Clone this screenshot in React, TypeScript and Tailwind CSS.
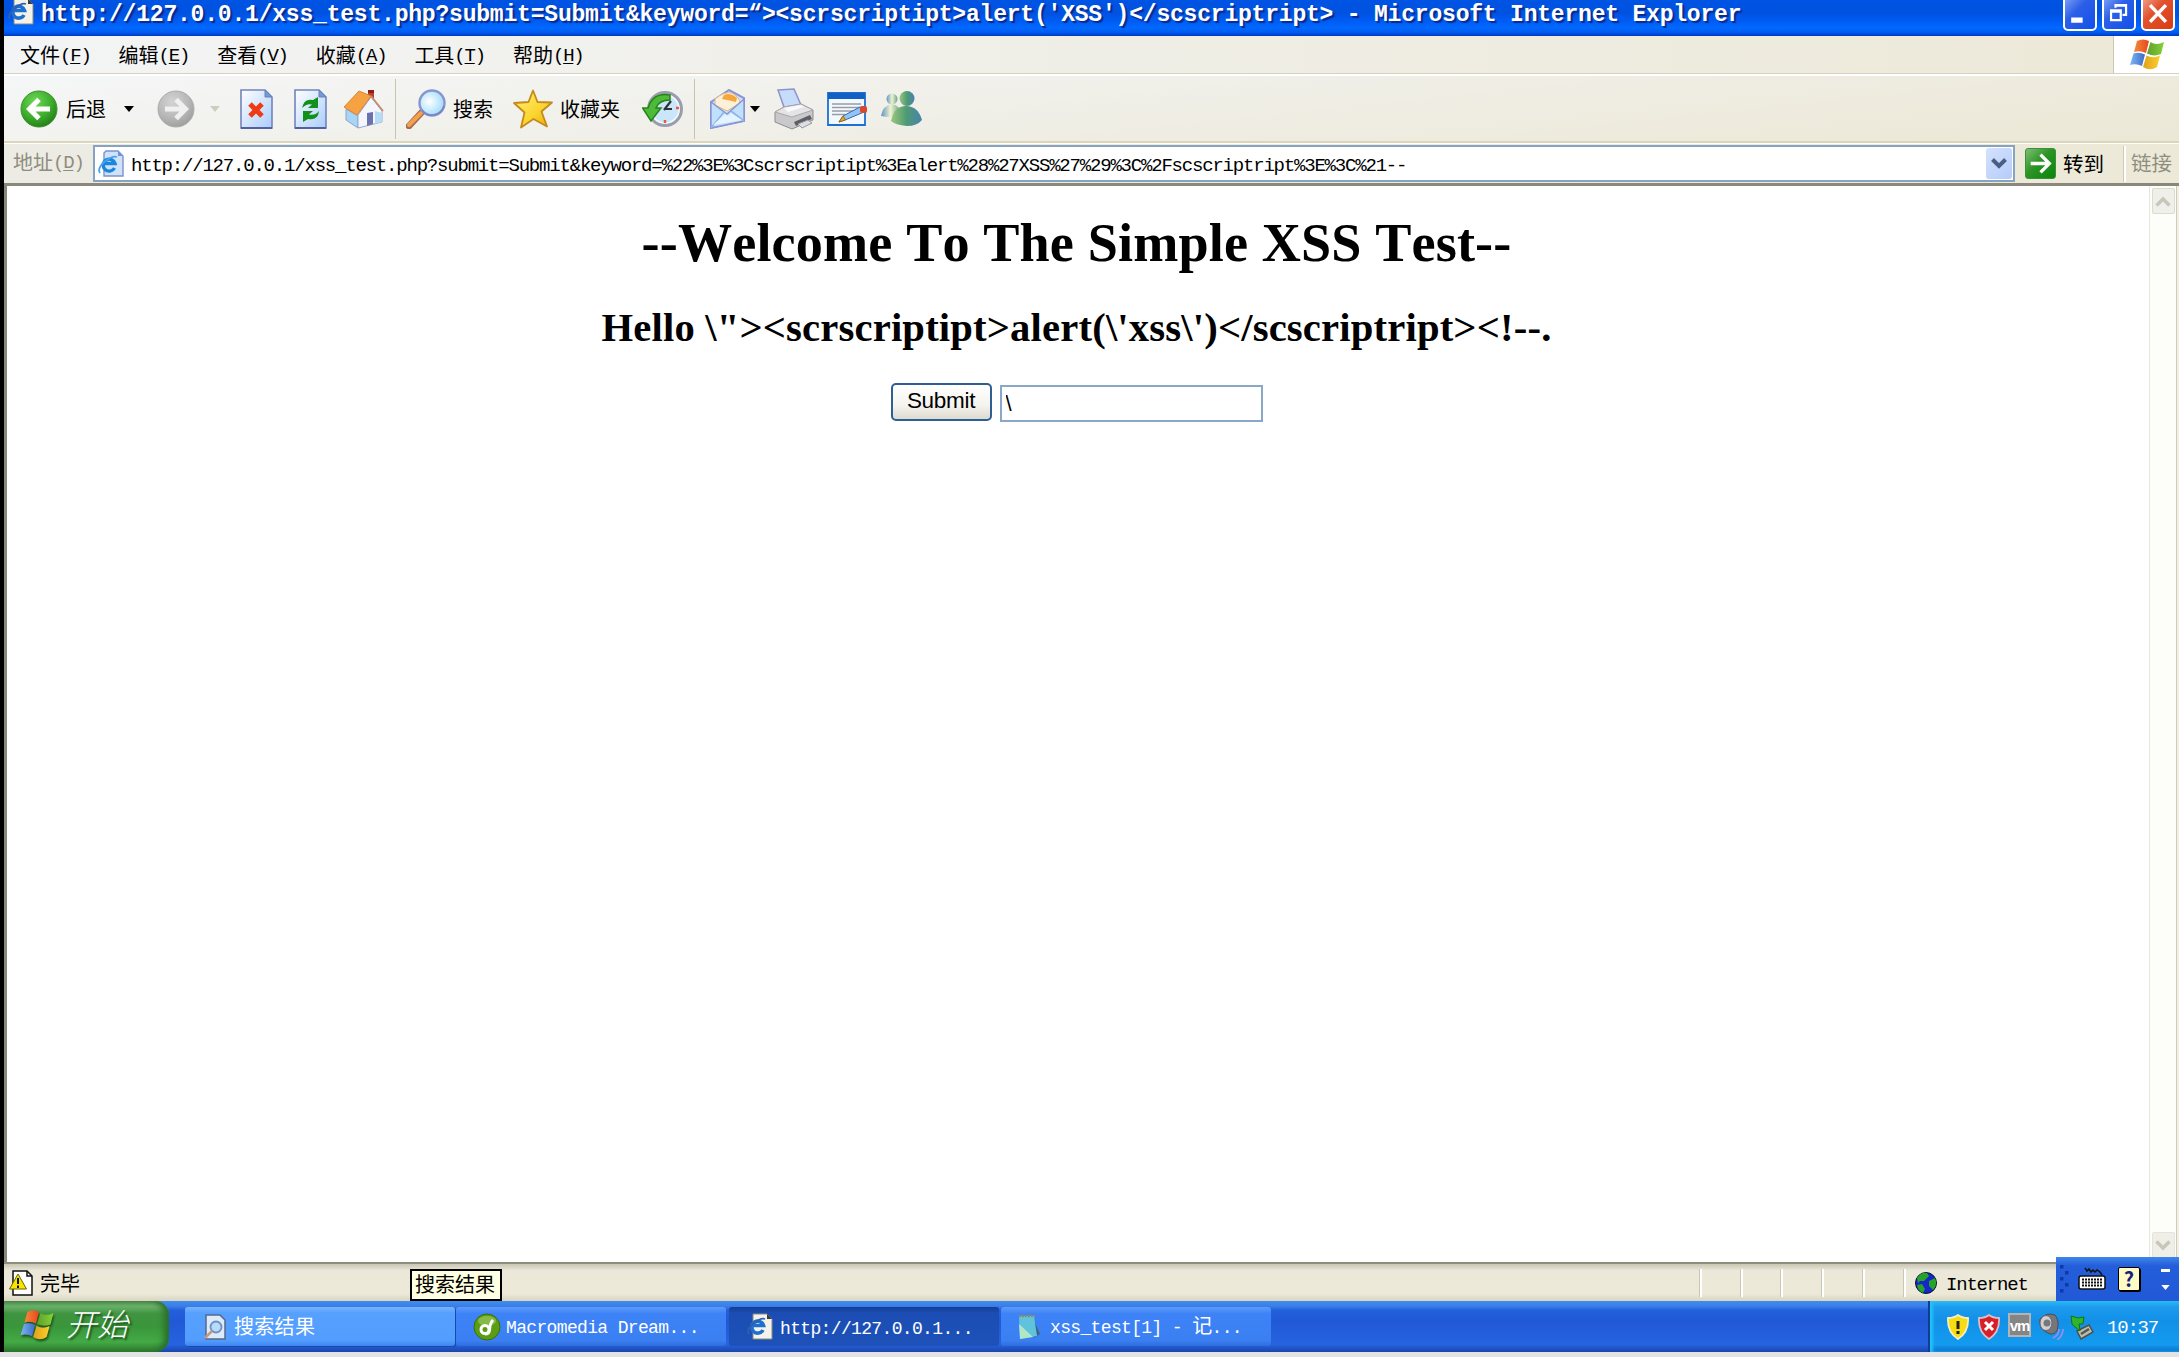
import React from "react";

const sans = "font-['Noto_Sans_CJK_SC','Liberation_Sans',sans-serif]";
const mono = "font-['Liberation_Mono','Noto_Sans_CJK_SC',monospace]";

const menus: [string, string][] = [
  ["文件", "F"],
  ["编辑", "E"],
  ["查看", "V"],
  ["收藏", "A"],
  ["工具", "T"],
  ["帮助", "H"],
];

function Flag({ className }: { className: string }) {
  return (
    <svg viewBox="0 0 34 31" className={className}>
      <defs>
        <linearGradient id="flagRed"><stop offset="0" stopColor="#f58a3c" /><stop offset="1" stopColor="#e8471c" /></linearGradient>
        <linearGradient id="flagGreen"><stop offset="0" stopColor="#5f9f2c" /><stop offset="1" stopColor="#86d236" /></linearGradient>
        <linearGradient id="flagBlue"><stop offset="0" stopColor="#7fb6f2" /><stop offset="1" stopColor="#3a6cc8" /></linearGradient>
        <linearGradient id="flagGold"><stop offset="0" stopColor="#e0a01c" /><stop offset="1" stopColor="#fbd02a" /></linearGradient>
      </defs>
      <path d="M7 2 Q13 -1 19 2 L16 14 Q10 11 4 13 Z" fill="url(#flagRed)" />
      <path d="M20.500 3 Q26 7 34 3 L31 15 Q24 18 17 14.500 Z" fill="url(#flagGreen)" />
      <path d="M3.500 14.500 Q9 12.500 15 15.500 L12 27 Q6 24 0 26 Z" fill="url(#flagBlue)" />
      <path d="M16.500 16.500 Q23 20 30 16.500 L27 28 Q20 32.500 13 28 Z" fill="url(#flagGold)" />
    </svg>
  );
}

function IePage({ className }: { className: string }) {
  return (
    <svg viewBox="0 0 26 27" className={className}>
      <path d="M6 1 H20 L25 6 V26 H6 Z" fill="#f4f3ea" stroke="#8a8a80" strokeWidth="1" />
      <path d="M20 1 V6 H25 Z" fill="#3c3c3c" />
      <path d="M16 17 A6 6 0 1 1 16.500 12.500 H6" fill="none" stroke="#1e70d0" strokeWidth="3.600" />
      <path d="M2 21 Q-1 17 6 11 Q14 4 18 6" fill="none" stroke="#2f5fae" strokeWidth="1.800" />
    </svg>
  );
}

function BluePage({ children }: { children: React.ReactNode }) {
  return (
    <svg viewBox="0 0 33 40" className="h-10 w-[33px]">
      <defs>
        <linearGradient id="page" x1="0" y1="0" x2="1" y2="1">
          <stop offset="0" stopColor="#fff" />
          <stop offset="1" stopColor="#a9cdfb" />
        </linearGradient>
      </defs>
      <path d="M1 1 H25 L32 8 V39 H1 Z" fill="url(#page)" stroke="#7484bd" strokeWidth="1.6" />
      <path d="M1 39 H32" stroke="#5560a0" strokeWidth="2" />
      <path d="M25 1 V8 H32 Z" fill="#6f9bd8" stroke="#6a80b8" />
      {children}
    </svg>
  );
}

function Round({ on, flip }: { on: boolean; flip?: boolean }) {
  const id = on ? "roundOn" : "roundOff";
  return (
    <svg viewBox="0 0 38 38" className="h-[38px] w-[38px]">
      <defs>
        <radialGradient id={id} cx=".4" cy=".3" r=".75">
          <stop offset="0" stopColor={on ? "#6fd857" : "#d4d4d4"} />
          <stop offset=".6" stopColor={on ? "#3cac2b" : "#b7b7b7"} />
          <stop offset="1" stopColor={on ? "#217a16" : "#9c9c9c"} />
        </radialGradient>
      </defs>
      <circle cx="19" cy="19" r="18" fill={`url(#${id})`} stroke={on ? "#3c8f30" : "#adadad"} />
      <g transform={flip ? "translate(38 0) scale(-1 1)" : undefined}>
        <path d="M30 19 H10 M19 9.5 L9.5 19 L19 28.5" fill="none" stroke={on ? "#fff" : "#f0f0f0"} strokeWidth="5" />
      </g>
    </svg>
  );
}

function Caret({ className }: { className: string }) {
  return (
    <svg viewBox="0 0 10 6" className={className}>
      <path d="M0 0 H10 L5 6 Z" fill="currentColor" />
    </svg>
  );
}

function House() {
  return (
    <svg viewBox="0 0 40 40" className="h-10 w-10">
      <path d="M24 1 H30 V14 H24 Z" fill="#b8402c" />
      <path d="M24 1 H30 V4 H24 Z" fill="#8d1f14" />
      <path d="M2 20 L14 27 V39 L2 31 Z" fill="#a9d5f5" stroke="#88a6cc" />
      <path d="M14 26 L27 8 L38 22 V33 L14 39 Z" fill="#f3f7fd" stroke="#9aa7cc" />
      <path d="M31 22 L38 24 V33 L31 35 Z" fill="#b5dbf7" />
      <path d="M23 24 L29 23 V35 L23 37 Z" fill="#6c72b0" />
      <path d="M15 2 L27 7 L13 26 L0 18 Z" fill="#f6a243" stroke="#d98536" />
      <path d="M27 7 L39 22" stroke="#c98a6a" strokeWidth="1.800" />
    </svg>
  );
}

function Magnifier() {
  return (
    <svg viewBox="0 0 40 40" className="h-10 w-10">
      <defs>
        <radialGradient id="lens" cx=".4" cy=".45" r=".6">
          <stop offset="0" stopColor="#fff" />
          <stop offset="1" stopColor="#9fdcfa" />
        </radialGradient>
      </defs>
      <path d="M16 23 L3 37" stroke="#a56a50" strokeWidth="6.5" strokeLinecap="round" />
      <path d="M15 24 L3 36" stroke="#f5a04a" strokeWidth="4" strokeLinecap="round" />
      <circle cx="26" cy="14" r="12.5" fill="url(#lens)" stroke="#8796cf" strokeWidth="2.4" />
      <path d="M16 21 A12.5 12.5 0 0 0 38 17" fill="none" stroke="#7b82c4" strokeWidth="1.5" />
    </svg>
  );
}

function Star() {
  return (
    <svg viewBox="0 0 40 40" className="h-10 w-10">
      <defs>
        <linearGradient id="star" x1="0" y1="0" x2="1" y2="1">
          <stop offset="0" stopColor="#fff27a" />
          <stop offset=".6" stopColor="#fbd42e" />
          <stop offset="1" stopColor="#e8a50c" />
        </linearGradient>
      </defs>
      <path d="M20 1.5 L24.5 13 L39 13.5 L28.5 22.5 L34 37.5 L20.5 30 L8 38.5 L11.5 23.5 L1 14 L15.5 13 Z" fill="url(#star)" stroke="#c48a1a" strokeWidth="1.8" strokeLinejoin="round" />
    </svg>
  );
}

function History() {
  return (
    <svg viewBox="0 0 41 38" className="h-[38px] w-[41px]">
      <circle cx="23" cy="19" r="16.5" fill="#c9e6fb" stroke="#9a9dac" strokeWidth="3" />
      <circle cx="23" cy="19" r="14" fill="none" stroke="#f4f8fc" strokeWidth="1.5" />
      <path d="M22 20 L29 11 M22 19 H30" stroke="#333" strokeWidth="2.2" />
      <path d="M34 18 h3 M23 30 v3" stroke="#ef5a3a" strokeWidth="2.500" />
      <path d="M28 5 Q11 2 6 18 H0.500 L9 31 L19 18 H14 Q17 10 28 10 Z" fill="#4dba38" stroke="#26831c" strokeWidth="1.5" />
    </svg>
  );
}

function Mail() {
  return (
    <svg viewBox="0 0 35 40" className="h-10 w-[35px]">
      <path d="M1 13 L19 1 L34 9 V32 L1 39 Z" fill="#cde3fb" stroke="#8b93d4" strokeWidth="2" />
      <path d="M5 10 Q15 2 22 4 Q30 9 30 14 L17 22 L5 16 Z" fill="#fdf0d8" stroke="#d9b787" />
      <path d="M14 6 Q20 3 27 9 L26 13 Q18 11 12 10 Z" fill="#f5a73b" />
      <path d="M1 13 L17 25 L34 10 V32 L1 39 Z" fill="#bfe1fb" stroke="#8b93d4" strokeWidth="1.4" />
      <path d="M1 39 L14 23 M34 32 L21 22" stroke="#8fb5e8" strokeWidth="1.6" />
      <path d="M3 36 L15 25 L18 27 L21 24 L32 31 Z" fill="#e4f4ff" />
    </svg>
  );
}

function Printer() {
  return (
    <svg viewBox="0 0 40 42" className="h-[42px] w-10">
      <path d="M4 2 L20 1 L27 17 L11 22 Z" fill="#c6dcfa" stroke="#8d94c8" strokeWidth="1.5" />
      <path d="M1 24 L10 19 L27 16 L39 22 V32 L18 41 L1 34 Z" fill="#c9c9cc" stroke="#8d8d92" />
      <path d="M1 24 L10 19 L27 16 L39 22 L18 29 Z" fill="#e4e4e7" stroke="#a8a8ac" />
      <path d="M10 20 L27 17 L30 19 L14 24 Z" fill="#fafafc" />
      <path d="M20 34 L36 27 L38 31 L22 38 Z" fill="#5d5d66" />
      <path d="M24 36 L34 32 L38 35 L28 40 Z" fill="#dedee8" stroke="#999" />
    </svg>
  );
}

function Edit() {
  return (
    <svg viewBox="0 0 41 34" className="h-[34px] w-[41px]">
      <path d="M1 1 H38 V33 H1 Z" fill="#f2f8ff" stroke="#1d6fd0" strokeWidth="1.8" />
      <path d="M1 1 H38 V7 H1 Z" fill="#1260c4" />
      <path d="M5 12 H34 M5 15.5 H34 M5 19 H26 M5 22.500 H18" stroke="#9b9ba2" strokeWidth="1.3" />
      <path d="M12 30 L16 24 L33 15 L37 20 L18 28 Z" fill="#8fc6f7" stroke="#3a66b0" />
      <path d="M12 30 L16 24 L18.500 28 Z" fill="#e8a82e" stroke="#a06a10" />
      <rect x="33" y="14" width="7" height="7" rx="2" fill="#d9482e" />
    </svg>
  );
}

function People() {
  return (
    <svg viewBox="0 0 41 35" className="h-[35px] w-[41px]">
      <defs>
        <linearGradient id="green">
          <stop offset="0" stopColor="#9cc77c" />
          <stop offset=".5" stopColor="#4d9a74" />
          <stop offset="1" stopColor="#4a82ad" />
        </linearGradient>
        <linearGradient id="pale">
          <stop offset="0" stopColor="#5d93c4" />
          <stop offset=".5" stopColor="#f0f3cf" />
          <stop offset="1" stopColor="#6ba38c" />
        </linearGradient>
      </defs>
      <circle cx="11" cy="8" r="5.500" fill="url(#pale)" />
      <path d="M0 25 Q2 14 11 13 Q20 14 19 25 Q8 27 0 25 Z" fill="url(#pale)" />
      <path d="M10 30 Q13 15 25 15 Q37 15 41 29 Q36 35 26 35 Q14 34 10 30 Z" fill="url(#green)" />
      <circle cx="26" cy="7.500" r="7.500" fill="url(#green)" />
    </svg>
  );
}

const taskBase =
  "flex h-[39px] w-[270px] shrink-0 items-center overflow-hidden rounded-[3px] whitespace-pre text-[18px] tracking-[-0.65px] text-white";

export default function App() {
  return (
    <div className="flex h-[1357px] w-[2179px] flex-col overflow-hidden bg-[#e3e3e6]">
      <div className="flex h-[1352px] flex-col border-l-4 border-black">
        {/* Title bar */}
        <div className="flex h-9 shrink-0 items-start bg-[linear-gradient(#0054e3_0%,#0052e0_35%,#005cf5_60%,#0069ff_78%,#005bf0_90%,#0037c4_100%)]">
          <IePage className="-mt-0.5 ml-1 h-[27px] w-[26px]" />
          <div className={`${mono} ml-[7px] w-[1720px] pt-0.5 text-[23px] leading-[27px] font-bold tracking-[-0.200px] whitespace-pre text-white [text-shadow:2px_2px_1px_#0a2a8c]`}>
            {"http://127.0.0.1/xss_test.php?submit=Submit&keyword=“><scrscriptipt>alert('XSS')</scscriptript> - Microsoft Internet Explorer"}
          </div>
          <div className="ml-auto flex gap-[5px] pr-1">
            <svg viewBox="0 0 34 35" className="-mt-1 h-[35px] w-[34px] rounded-[5px] border-2 border-white bg-[linear-gradient(135deg,#7d9ff5,#2c5fe8_40%,#1150ea)]">
              <path d="M7 22 H20 V28 H7 Z" fill="#fff" />
            </svg>
            <svg viewBox="0 0 34 35" className="-mt-1 h-[35px] w-[34px] rounded-[5px] border-2 border-white bg-[linear-gradient(135deg,#7d9ff5,#2c5fe8_40%,#1150ea)]">
              <path d="M13 11 V8 H25 V19 H21 M13 8.500 H25" fill="none" stroke="#fff" strokeWidth="2.5" />
              <path d="M8 14 H19 V25 H8 Z M8 15.500 H19" fill="none" stroke="#fff" strokeWidth="2.500" />
            </svg>
            <svg viewBox="0 0 34 35" className="-mt-1 h-[35px] w-[34px] rounded-[5px] border-2 border-white bg-[linear-gradient(135deg,#f0a08a,#e2512e_40%,#d83c14)]">
              <path d="M8 8 L26 27 M26 8 L8 27" stroke="#fff" strokeWidth="4" />
            </svg>
          </div>
        </div>

        {/* Menu bar */}
        <div className="flex h-[38px] shrink-0 items-stretch border-b border-[#d8d2bd] bg-[linear-gradient(90deg,#f3f4f5,#f0efe9_40%,#ece9d8)]">
          <div className="flex items-center gap-[28px] pl-4 text-black">
            {menus.map(([label, key]) => (
              <span key={key} className="flex w-[70.6px] items-center">
                <span className={`${sans} text-[20px] leading-[30px]`}>{label}</span>
                <span className={`${mono} pt-0.5 text-[19px] leading-[28px] tracking-[-1.200px]`}>
                  (<span className="underline underline-offset-2">{key}</span>)
                </span>
              </span>
            ))}
          </div>
          <div className="ml-auto flex w-[66px] items-center justify-center border-l border-[#cdc8b4] bg-white">
            <Flag className="h-[31px] w-[34px]" />
          </div>
        </div>

        {/* Toolbar */}
        <div className={`${sans} flex h-[69px] shrink-0 items-center border-t-2 border-b-2 border-t-white border-b-[#dcd5b8] bg-[linear-gradient(174deg,#f5f6f7,#f0efe8_45%,#ece8d6)] text-[20px] leading-[30px] text-black`}>
          <div className="ml-4 flex items-center">
            <Round on />
            <span className="ml-[8px] w-10">后退</span>
            <Caret className="ml-[18px] h-1.5 w-[10px]" />
          </div>
          <div className="ml-[23px] flex items-center">
            <Round on={false} flip />
            <Caret className="ml-[15px] h-1.5 w-[10px] text-[#cfcdc2]" />
          </div>
          <div className="ml-5 flex items-center">
            <BluePage>
              <path d="M10 15 L22 27 M22 15 L10 27" stroke="#f03a14" strokeWidth="5" />
            </BluePage>
            <div className="ml-[21px]">
              <BluePage>
                <path d="M8 19 Q10 9 19 11 L24 8 V19 H14 L18 15.500 Q13 14 8 19 Z" fill="#12911a" />
                <path d="M25 22 Q24 32 14 30 L9 33 V22 H19 L15 25.500 Q21 27 25 22 Z" fill="#12911a" />
              </BluePage>
            </div>
            <div className="ml-[17px]">
              <House />
            </div>
          </div>
          <div className="ml-[11px] h-[60px] w-px bg-[#c9c5ad]" />
          <div className="ml-[10px] flex items-center">
            <Magnifier />
            <span className="ml-[7px] w-10">搜索</span>
          </div>
          <div className="ml-5 flex items-center">
            <Star />
            <span className="ml-[7px] w-[61px]">收藏夹</span>
          </div>
          <div className="ml-[21px]">
            <History />
          </div>
          <div className="ml-[11px] h-[60px] w-px bg-[#c9c5ad]" />
          <div className="ml-[15px] flex items-center">
            <Mail />
            <Caret className="ml-[5px] h-1.5 w-[10px]" />
          </div>
          <div className="ml-[14px]">
            <Printer />
          </div>
          <div className="ml-[13px]">
            <Edit />
          </div>
          <div className="ml-[13px]">
            <People />
          </div>
        </div>

        {/* Address bar */}
        <div className="flex h-10 shrink-0 items-center border-t border-white bg-[linear-gradient(90deg,#edece4,#ece9d8)]">
          <span className="flex w-[89px] items-center pb-1 pl-[9px] text-[#8f8d80]">
            <span className={`${sans} text-[20px] leading-[30px]`}>地址</span>
            <span className={`${mono} pt-0.5 text-[19px] leading-[28px] tracking-[-1.200px]`}>
              (<span className="underline underline-offset-2">D</span>)
            </span>
          </span>
          <div className="flex h-[37px] w-[1922px] items-center border-2 border-[#86a3c4] bg-white pr-px pl-[3px]">
            <svg viewBox="0 0 27 27" className="h-[27px] w-[27px]">
              <path d="M8 1 H20 L25 6 V26 H6 V3 Z" fill="#cfe2fb" stroke="#7c92cc" strokeWidth="1.4" />
              <path d="M20 1 V6 H25 Z" fill="#6f94d6" />
              <path d="M16.500 18 A6 6 0 1 1 17 13.500 H6" fill="none" stroke="#1c86dc" strokeWidth="3.400" />
              <path d="M2 23 Q-1 19 6 12 Q15 5 19 7" fill="none" stroke="#4aa3e8" strokeWidth="1.800" />
            </svg>
            <span className={`${mono} ml-[6px] pt-1 text-[19px] leading-[30px] tracking-[-1.200px] whitespace-pre text-black`}>
              {"http://127.0.0.1/xss_test.php?submit=Submit&keyword=%22%3E%3Cscrscriptipt%3Ealert%28%27XSS%27%29%3C%2Fscscriptript%3E%3C%21--"}
            </span>
            <div className="ml-auto flex h-[31px] w-[26px] items-center justify-center rounded-[3px] bg-[linear-gradient(135deg,#d6e2fd,#b4cbfa)]">
              <svg viewBox="0 0 16 11" className="h-[11px] w-4">
                <path d="M1.500 1.500 L8 8 L14.500 1.500" fill="none" stroke="#4a5f86" strokeWidth="4" />
              </svg>
            </div>
          </div>
          <svg viewBox="0 0 31 31" className="ml-[10px] h-[31px] w-[31px] rounded-[3px] border border-[#3d8f3a] bg-[linear-gradient(135deg,#7fbf72,#2b9425_45%,#0b860b)]">
            <path d="M5 15.500 H25 M15.500 6 L25 15.500 L15.500 25" fill="none" stroke="#fff" strokeWidth="3.500" />
          </svg>
          <span className={`${sans} ml-[7px] w-[42px] pb-0.5 text-[20.500px] leading-[30px] text-black`}>转到</span>
          <div className="ml-[18px] h-9 w-[3px] border-l border-[#cfcab0] bg-white" />
          <span className={`${sans} ml-[5px] w-[42px] pb-1 text-[20.500px] leading-[30px] text-[#8f8d80]`}>链接</span>
        </div>

        {/* Page */}
        <div className="flex h-[1079px] shrink-0 border-t-[3px] border-l-[3px] border-t-[#8a887a] border-l-[#8a887a] bg-white">
          <div className="flex flex-1 flex-col items-center pr-[3px] font-['Liberation_Serif',serif] font-bold text-black [font-kerning:none]">
            <h1 className="mt-[26px] text-[54.200px] leading-[62px] tracking-[0.130px] whitespace-pre">--Welcome To The Simple XSS Test--</h1>
            <h2 className="mt-[31px] text-[40.650px] leading-[46px] tracking-[0.170px] whitespace-pre">
              {"Hello \\\"><scrscriptipt>alert(\\'xss\\')</scscriptript><!--."}
            </h2>
            <form className="mt-[32px] flex items-start gap-2" onSubmit={(e) => e.preventDefault()}>
              <button className="h-[38px] w-[101px] rounded-[5px] border-2 border-[#2c5f95] bg-[linear-gradient(#fff,#f4f3ee_60%,#dedbce)] pb-0.5 font-['Liberation_Sans',sans-serif] text-[22.500px] leading-[30px] font-normal">
                <span className="tracking-[-0.3px]">Submit</span>
              </button>
              <input
                defaultValue="\"
                className="mt-0.5 h-[37px] w-[263px] border-2 border-[#8aa7c5] bg-white pl-1 font-['Liberation_Sans',sans-serif] text-[22px] font-normal outline-none"
              />
            </form>
          </div>
          <div className="flex w-[27px] flex-col items-center justify-between border-l border-[#e6e6da] bg-[#fdfdfa] pt-[2px] pb-[4px]">
            <div className="flex h-[26px] w-[23px] items-center justify-center rounded-[2px] border border-[#dcdccc] bg-[#f0f0ea]">
              <svg viewBox="0 0 16 11" className="h-[11px] w-4">
                <path d="M1.500 9.500 L8 3 L14.500 9.500" fill="none" stroke="#c9c7ba" strokeWidth="3.500" />
              </svg>
            </div>
            <div className="flex h-[26px] w-[23px] items-center justify-center rounded-[2px] border border-[#e4e4da] bg-[#efefe8]">
              <svg viewBox="0 0 16 11" className="h-[11px] w-4">
                <path d="M1.500 1.500 L8 8 L14.500 1.500" fill="none" stroke="#c9c7ba" strokeWidth="3.500" />
              </svg>
            </div>
          </div>
          <div className="w-[3px] border-l border-[#cfccbc] bg-[#f1efe2]" />
        </div>

        {/* Status bar */}
        <div className="relative flex h-[39px] shrink-0 items-center border-t-2 border-[#8f8d7e] bg-[linear-gradient(#c9c6b4_0%,#ebe8d9_18%,#ece9d8_80%,#d9d5c0_100%)]">
          <svg viewBox="0 0 25 26" className="ml-[5px] h-[26px] w-[25px]">
            <path d="M4 1 H18 L23 6 V25 H4 Z" fill="#fff" stroke="#111" strokeWidth="1.500" />
            <path d="M18 1 V6 H23" fill="none" stroke="#111" strokeWidth="1.500" />
            <path d="M9 4 L17.500 19 H0.500 Z" fill="#f5e600" stroke="#6d6400" />
            <path d="M9 8 V14 M9 15.500 V18" stroke="#111" strokeWidth="2" />
          </svg>
          <span className={`${sans} ml-[6px] text-[20px] leading-[30px] text-black`}>完毕</span>
          <div className={`${sans} absolute top-[5px] left-[406px] flex h-8 w-[92px] items-center border-2 border-black bg-[#ffffe1] pl-[3px] text-[20px] leading-[26px] whitespace-nowrap text-black`}>
            <span className="-mt-0.5">搜索结果</span>
          </div>
          <div className="ml-auto flex h-full items-center">
            {[0, 1, 2, 3, 4, 5].map((i) => (
              <div key={i} className="h-[28px] w-[40.900px] border-l border-[#cbc7b2] shadow-[inset_2px_0_0_#fff]" />
            ))}
          </div>
          <svg viewBox="0 0 22 22" className="-ml-[29px] h-[22px] w-[22px]">
            <circle cx="11" cy="11" r="10.500" fill="#1626c8" stroke="#0a1030" />
            <path d="M2 6 Q6 0 12 1 L14 4 L9 9 L5 9 L3 11 Z M14 9 L20 6 Q23 13 18 18 L14 14 Z M2 13 L7 12 L10 17 L8 21 Q3 19 2 13 Z" fill="#27a327" />
          </svg>
          <span className={`${mono} ml-[9px] w-[110px] pt-1 text-[19px] leading-[30px] tracking-[-1.200px] whitespace-pre text-black`}>Internet</span>
          <div className="-mt-[7px] flex h-[44px] w-[123px] shrink-0 items-center self-start bg-[linear-gradient(#3f86ea_0%,#245edb_20%,#2158d6_100%)]">
            <svg viewBox="0 0 10 28" className="ml-[3px] h-7 w-[10px]">
              {[2, 8, 14, 20, 26].map((y, i) => (
                <rect key={y} x={i % 2 ? 6 : 1} y={y - 2} width="3.500" height="3.500" fill="#0c3ba8" />
              ))}
            </svg>
            <svg viewBox="0 0 28 24" className="ml-[9px] h-6 w-7">
              <path d="M7 1 L9 4 L11 2 L13 5 L15 3 L17 5 L19 3 L22 5 L24 8" fill="none" stroke="#111" strokeWidth="1.500" />
              <rect x="1" y="9" width="26" height="13" rx="2" fill="#fff" stroke="#111" strokeWidth="1.500" />
              <path d="M4 12.500 H24 M4 15.500 H24 M4 18.500 H24" stroke="#111" strokeWidth="2" strokeDasharray="2 1" />
            </svg>
            <div className={`${sans} ml-[12px] flex h-6 w-[22px] items-center justify-center rounded-[2px] border border-black bg-[#fffbc4] text-[20px] leading-[22px] font-bold text-[#14207c] shadow-[1px_1px_0_#000]`}>
              ?
            </div>
            <div className="ml-[21px] flex flex-col items-center gap-[13px] text-white">
              <div className="h-[3px] w-[9px] bg-white" />
              <Caret className="h-[5px] w-[9px]" />
            </div>
          </div>
        </div>

        {/* Taskbar */}
        <div className="flex h-[51px] shrink-0 items-center bg-[linear-gradient(#3f8cf0_0%,#3a80e6_10%,#2360dc_18%,#2158d6_40%,#2663e0_85%,#1a46ac_100%)]">
          <div className="flex h-full w-[165px] shrink-0 items-center rounded-r-[14px] bg-[linear-gradient(#5d9b5f_0%,#6db36c_10%,#3f9440_25%,#3a963b_50%,#43aa45_80%,#2f7c30_100%)] shadow-[inset_-5px_0_6px_#2a6e2c]">
            <Flag className="mb-1 ml-[16px] h-[30px] w-[34px] drop-shadow-[1px_2px_1px_#1d4d1d]" />
            <span className={`${sans} ml-[12px] w-[70px] pb-[7px] text-[31px] leading-[44px] font-light text-white italic [text-shadow:2px_2px_2px_#1d4d1d]`}>开始</span>
          </div>
          <div className={`${taskBase} ${sans} ml-4 bg-[linear-gradient(#7ab4ff_0%,#56a0ff_15%,#529dff_85%,#3f86ec_100%)] shadow-[1px_1px_0_#1a48ae]`}>
            <svg viewBox="0 0 24 26" className="ml-[18px] h-[26px] w-6">
              <path d="M3 1 H17 L22 6 V25 H3 Z" fill="#dcebfb" stroke="#55688c" strokeWidth="1.500" />
              <circle cx="13" cy="13" r="5.500" fill="#b8dcf8" stroke="#6f8fc0" strokeWidth="1.800" />
              <path d="M9 17 L2 24" stroke="#c79a7a" strokeWidth="2.500" />
            </svg>
            <span className="ml-[7px] pb-0.5 text-[20px] leading-[30px] tracking-[0.300px]">搜索结果</span>
          </div>
          <div className={`${taskBase} ${mono} ml-px bg-[linear-gradient(#5c9bfb_0%,#3d82f6_18%,#3b80f3_85%,#2f6ddc_100%)]`}>
            <svg viewBox="0 0 28 28" className="ml-[17px] h-7 w-7">
              <circle cx="14" cy="14" r="13" fill="#5a9c12" stroke="#3b6f0a" />
              <ellipse cx="14" cy="8" rx="9" ry="5" fill="#a4cf6a" fillOpacity=".6" />
              <circle cx="12" cy="16.500" r="4" fill="none" stroke="#fff" strokeWidth="3" />
              <path d="M20 7 Q17 10 16.500 17 Q16 21 12 21" fill="none" stroke="#fff" strokeWidth="3" />
            </svg>
            <span className="ml-[5px] pt-0.5 leading-[30px]">Macromedia Dream...</span>
          </div>
          <div className={`${taskBase} ${mono} ml-[3px] bg-[linear-gradient(#163d94_0%,#1b4db4_15%,#1e52b9_100%)]`}>
            <IePage className="ml-[18px] h-[27px] w-[26px]" />
            <span className="ml-[7px] pt-1 leading-[30px]">http://127.0.0.1...</span>
          </div>
          <div className={`${taskBase} ${mono} ml-[2px] bg-[linear-gradient(#5c9bfb_0%,#3d82f6_18%,#3b80f3_85%,#2f6ddc_100%)]`}>
            <svg viewBox="0 0 24 26" className="ml-[16px] h-[26px] w-6">
              <path d="M16 4 L23 20 L17 24 Z" fill="#3c6684" />
              <path d="M2 2 H17 L20 22 L3 25 Z" fill="#5fc3dc" />
              <path d="M2 10 L3 25 L16 23 Z" fill="#c7f0c0" fillOpacity=".8" />
              <path d="M2 2 H18" stroke="#8d8a6a" strokeWidth="2.500" strokeDasharray="2 1" />
            </svg>
            <span className="ml-[9px] pt-0.5 leading-[30px]">xss_test[1] - <span className="text-[20px]">记</span>...</span>
          </div>
          <div className="ml-auto flex h-full w-[251px] items-center border-l-2 border-[#0c3f92] bg-[linear-gradient(#2bb8f4_0%,#1c9bee_12%,#1290e8_40%,#139bf0_85%,#0c70cc_100%)] shadow-[inset_3px_0_3px_#22c3f8]">
            <svg viewBox="0 0 22 26" className="ml-[17px] h-[26px] w-[22px]">
              <path d="M11 1 Q15 4 21 4 Q22 18 11 25 Q0 18 1 4 Q7 4 11 1 Z" fill="#f6dc10" stroke="#f5efc0" strokeWidth="1.800" />
              <path d="M11 7 V15 M11 17 V20" stroke="#222" strokeWidth="3" />
            </svg>
            <svg viewBox="0 0 22 26" className="ml-[9px] h-[26px] w-[22px]">
              <path d="M11 1 Q15 4 21 4 Q22 18 11 25 Q0 18 1 4 Q7 4 11 1 Z" fill="#d81e28" stroke="#d8c0c4" strokeWidth="1.800" />
              <path d="M7 8 L15 16 M15 8 L7 16" stroke="#fff" strokeWidth="3" />
            </svg>
            <div className="mb-[3px] ml-[8px] flex h-6 w-[23px] items-center justify-center border-2 border-[#b4b4b4] bg-[#858585] font-['Liberation_Sans',sans-serif] text-[15px] leading-none font-bold tracking-[-1px] text-white">
              vm
            </div>
            <svg viewBox="0 0 27 27" className="ml-[7px] h-[27px] w-[27px]">
              <path d="M2 6 Q8 -1 17 2 Q22 8 19 18 Q14 23 10 20 Q0 16 2 6 Z" fill="#77777b" stroke="#4d4d52" />
              <ellipse cx="8" cy="10" rx="6" ry="7.500" fill="#cfcfd4" stroke="#66666b" />
              <circle cx="9" cy="10" r="3.500" fill="#77777c" />
              <path d="M15 25 Q21 22 21 16 M19 27 Q25 23 25 16" fill="none" stroke="#8d90ee" strokeWidth="1.800" />
            </svg>
            <svg viewBox="0 0 24 26" className="ml-[5px] h-[26px] w-6">
              <path d="M7 17 L19 11 L23 18 L11 25 Z" fill="#b9bcb0" stroke="#4b5049" strokeWidth="1.500" />
              <path d="M11 20 L19 15" stroke="#55584f" strokeWidth="2.500" />
              <path d="M1 2 L8 4 L14 3 L13 10 L9 10 L10 17 L4 12 L2 10 Z" fill="#2fb52c" stroke="#157213" />
            </svg>
            <span className={`${mono} ml-[13px] pt-0.5 text-[19px] leading-[30px] tracking-[-1.200px] text-white`}>10:37</span>
          </div>
        </div>
      </div>
    </div>
  );
}
